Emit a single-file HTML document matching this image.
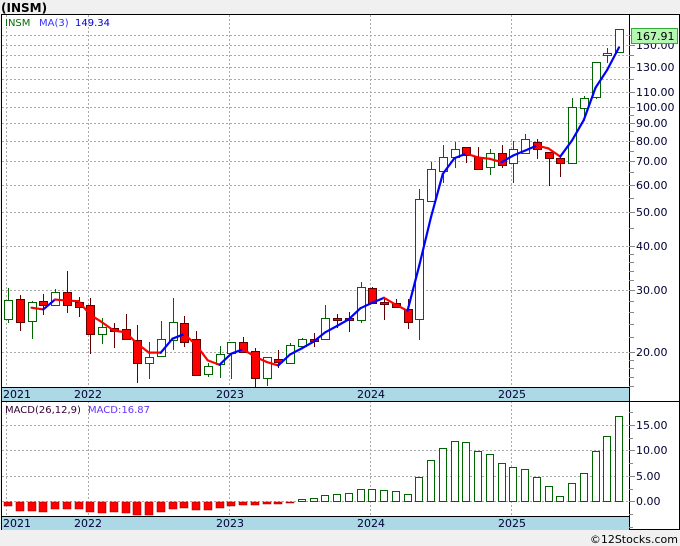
<!DOCTYPE html>
<html><head><meta charset="utf-8"><style>
body{margin:0;background:#f0f0f0;width:680px;height:546px;overflow:hidden;font-family:"DejaVu Sans",sans-serif}
svg{display:block}
</style></head><body>
<svg id="s" width="680" height="546" xmlns="http://www.w3.org/2000/svg" font-family="DejaVu Sans, sans-serif" font-size="11">
<rect x="0" y="0" width="680" height="546" fill="#f0f0f0"/>
<text x="1" y="12" font-size="12" font-weight="bold" fill="#000">(INSM)</text>
<rect x="1.5" y="14.5" width="678" height="515" fill="#fff" stroke="#000"/>
<g id="g"></g>
</svg>
<script>
var g=document.getElementById('g'),h='';
function Y(p){return 352-152.4*Math.log(p/20);}
function P(y){return 20*Math.exp((352-y)/152.4);}
function X(i){return 8+11.75*i;}
[160,150,140,130,120,110,100,90,80,70,60,50,40,30,20].forEach(function(p){var y=Math.round(Y(p))+.5;h+='<line x1="2" x2="629" y1="'+y+'" y2="'+y+'" stroke="#aaa" stroke-dasharray="2,2"/>';});
[6,88,229,370,511].forEach(function(x){h+='<line x1="'+(x+.5)+'" x2="'+(x+.5)+'" y1="15" y2="387" stroke="#aaa" stroke-dasharray="2,2"/><line x1="'+(x+.5)+'" x2="'+(x+.5)+'" y1="401" y2="516" stroke="#aaa" stroke-dasharray="2,2"/>';});
[425,450,476,501].forEach(function(y){h+='<line x1="2" x2="629" y1="'+(y+.5)+'" y2="'+(y+.5)+'" stroke="#aaa" stroke-dasharray="2,2"/>';});
var C=[[300,319,288,323,1],[299,322,295,331,0],[302,321,301,339,1],[301,305,294,315,0],[292,305,289,305,1],[292,305,271,313,0],[302,307,297,317,0],[305,334,298,354,0],[327,334,318,344,1],[328,331,323,348,0],[329,339,314,340,0],[340,363,325,383,0],[357,363,342,379,1],[339,356,321,356,1],[322,340,298,350,1],[323,342,316,347,0],[339,375,331,375,0],[366,374,363,377,1],[354,364,346,378,1],[342,353,342,379,1],[342,352,337,352,0],[351,378,348,387,0],[357,378,357,386,1],[359,362,350,368,0],[345,363,343,363,1],[339,346,338,346,1],[339,341,333,347,0],[318,339,305,339,1],[318,320,314,328,0],[318,320,312,332,0],[287,320,282,323,1],[288,303,287,303,0],[302,304,297,320,0],[303,307,299,307,0],[309,322,299,329,0],[199,319,189,340,1],[169,201,162,201,1],[157,171,145,183,1],[149,157,142,168,1],[147,155,147,163,0],[157,169,147,169,0],[153,167,149,175,1],[153,165,145,168,0],[149,163,141,183,1],[139,153,134,153,1],[142,149,139,159,0],[152,158,152,186,0],[158,163,156,177,0],[107,163,98,163,1],[98,108,96,117,1],[62,97,62,99,1],[53,55,48,63,1],[29,52,29,53,1]];
var closes=[];
C.forEach(function(c,i){var x=Math.round(X(i));var col=c[4]?'#006400':'#600000';
h+='<line x1="'+(x+.5)+'" x2="'+(x+.5)+'" y1="'+c[2]+'" y2="'+c[3]+'" stroke="'+col+'"/>';
var bh=Math.max(c[1]-c[0],1);
if(c[4])h+='<rect x="'+(x-3.5)+'" y="'+(c[0]+.5)+'" width="8" height="'+bh+'" fill="#fff" stroke="#006400"/>';
else h+='<rect x="'+(x-3.5)+'" y="'+(c[0]+.5)+'" width="8" height="'+bh+'" fill="#f00" stroke="#600000"/>';
closes.push(P(c[4]?c[0]:c[1]));});
var ma=[];for(var i=2;i<closes.length;i++)ma.push([X(i),Y((closes[i]+closes[i-1]+closes[i-2])/3)]);
for(var i=1;i<ma.length;i++){var col=ma[i][1]<ma[i-1][1]?'#0000ff':'#ff0000';h+='<line x1="'+ma[i-1][0]+'" y1="'+ma[i-1][1]+'" x2="'+ma[i][0]+'" y2="'+ma[i][1]+'" stroke="'+col+'" stroke-width="2.2" stroke-linecap="round"/>';}
var M=[506,511,511,512,509,509,509,512,513,512,513,515,515,512,509,508,510,510,508,506,505,505,504,504,503,499,498,495,494,493,489,489,490,491,494,477,460,448,441,442,451,454,463,467,469,477,486,496,483,473,451,436,416];
M.forEach(function(v,i){var x=Math.round(X(i));if(v>502)h+='<rect x="'+(x-4)+'" y="502" width="8" height="'+(v-502)+'" fill="#f00" stroke="#800" stroke-width=".5"/>';else h+='<rect x="'+(x-3.5)+'" y="'+(v+.5)+'" width="7" height="'+(501-v)+'" fill="#fff" stroke="#006400"/>';});
h+='<rect x="2" y="387" width="627" height="14" fill="#add8e6"/><line x1="2" x2="629" y1="387.5" y2="387.5" stroke="#000"/><line x1="2" x2="680" y1="401.5" y2="401.5" stroke="#000"/>';
h+='<rect x="2" y="516" width="627" height="14" fill="#add8e6"/><line x1="2" x2="629" y1="516.5" y2="516.5" stroke="#000"/>';
[[3,'2021'],[74,'2022'],[216,'2023'],[357,'2024'],[498,'2025']].forEach(function(d){h+='<text x="'+d[0]+'" y="398" fill="#000033">'+d[1]+'</text><text x="'+d[0]+'" y="527" fill="#000033">'+d[1]+'</text>';});
h+='<line x1="629.5" x2="629.5" y1="14" y2="530" stroke="#000"/>';
[16,17,18,19,22,24,26,28,32,34,36,38,45,55,65,75,85,95,120,140,160].forEach(function(p){var y=Math.round(Y(p))+.5;h+='<line x1="629" x2="634" y1="'+y+'" y2="'+y+'" stroke="#888"/>';});
[150,130,110,100,90,80,70,60,50,40,30,20].forEach(function(p){var y=Math.round(Y(p));h+='<line x1="629" x2="635" y1="'+(y+.5)+'" y2="'+(y+.5)+'" stroke="#888"/><text x="636" y="'+(y+4)+'" fill="#000033" font-size="11">'+p.toFixed(2)+'</text>';});
[[15,425],[10,450],[5,476],[0,501]].forEach(function(a){h+='<line x1="629" x2="635" y1="'+(a[1]+.5)+'" y2="'+(a[1]+.5)+'" stroke="#888"/><text x="636" y="'+(a[1]+4)+'" fill="#000033" font-size="11">'+a[0].toFixed(2)+'</text>';});
[412,438,463,489,514,527].forEach(function(y){h+='<line x1="629" x2="633" y1="'+(y+.5)+'" y2="'+(y+.5)+'" stroke="#888"/>';});
h+='<rect x="631.5" y="28.5" width="46" height="15" fill="#b3f7b3" stroke="#3a3"/><text x="636" y="40" fill="#000" font-size="11">167.91</text>';
h+='<text x="5" y="26" font-size="10" fill="#007000">INSM</text><text x="39" y="26" font-size="10" fill="#3333ff">MA(3)</text><text x="75" y="26" font-size="10" fill="#0000cc">149.34</text>';
h+='<text x="5" y="413" font-size="10" fill="#330033">MACD(26,12,9)</text><text x="88" y="413" font-size="10" fill="#6633ff">MACD:16.87</text>';
h+='<text x="678" y="543" text-anchor="end" font-size="11" fill="#000">©12Stocks.com</text>';
g.innerHTML=h;
</script>
</body></html>
